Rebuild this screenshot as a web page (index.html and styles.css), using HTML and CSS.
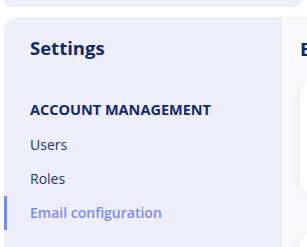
FILE: index.html
```html
<!DOCTYPE html>
<html lang="en">
    <head>
        <meta charset="UTF-8">
        <meta name="viewport" content="width=device-width, initial-scale=1.0">
        <title>Settings</title>
        <link rel="stylesheet" href="styles.css">
    </head>
    <body>
        <div class="topbar"></div>

        <div class="layout">
            <aside class="sidebar">
                <h1>Settings</h1>
                <h2>Account management</h2>
                <nav class="nav">
                    <a href="#" class="nav-item">Users</a>
                    <a href="#" class="nav-item">Roles</a>
                    <a href="#" class="nav-item active">Email configuration</a>
                </nav>
            </aside>

            <main class="content">
                <h1>Email configuration</h1>
                <div class="card"></div>
                <div class="card second"></div>
            </main>
        </div>
    </body>
</html>
```

FILE: styles.css
```css
body {
    font-family: "Open Sans", sans-serif;
    margin: 0;
    background-color: white;
    overflow: hidden;
    height: 247px;
}

.topbar {
    height: 7px;
    margin: 0 5px 0 4px;
    background-color: #eeeef9;
    border-radius: 0 0 10px 10px;
}

.layout {
    display: flex;
    margin: 10px 0 0 4px;
    height: 230px;
    overflow: hidden;
}

.sidebar {
    width: 278px;
    flex-shrink: 0;
    background-color: #eeeef9;
    border-radius: 14px 0 0 0;
    padding-top: 18px;
    box-sizing: border-box;
}

.sidebar h1 {
    margin: 0 0 0 26px;
    font-size: 18.5px;
    font-weight: 700;
    color: #112a6c;
    line-height: 26px;
}

.sidebar h2 {
    margin: 39px 0 0 26px;
    font-size: 14.5px;
    font-weight: 700;
    text-transform: uppercase;
    color: #112a6c;
    line-height: 20px;
}

.nav {
    display: flex;
    flex-direction: column;
    margin-top: 14px;
    gap: 12px;
}

.nav-item {
    display: block;
    padding-left: 23px;
    font-size: 14px;
    line-height: 22px;
    color: #253869;
    text-decoration: none;
    border-left: 3px solid transparent;
}

.nav-item.active {
    color: #7a8af5;
    font-weight: 600;
    border-left-color: #7a8af5;
    padding-top: 6px;
    padding-bottom: 6px;
    margin-top: -6px;
}

.content {
    flex: 1;
    background-color: #f8f8fa;
    padding: 20px 0 0 18px;
    min-width: 0;
}

.content h1 {
    margin: 0;
    font-size: 18.5px;
    font-weight: 700;
    color: #112a6c;
    line-height: 24px;
    white-space: nowrap;
}

.card {
    margin-top: 25px;
    height: 105px;
    background-color: white;
    border-radius: 10px 0 0 10px;
    box-shadow: 0 2px 10px rgba(0,0,0,0.06);
}

.card.second {
    margin-top: 44px;
}
```
